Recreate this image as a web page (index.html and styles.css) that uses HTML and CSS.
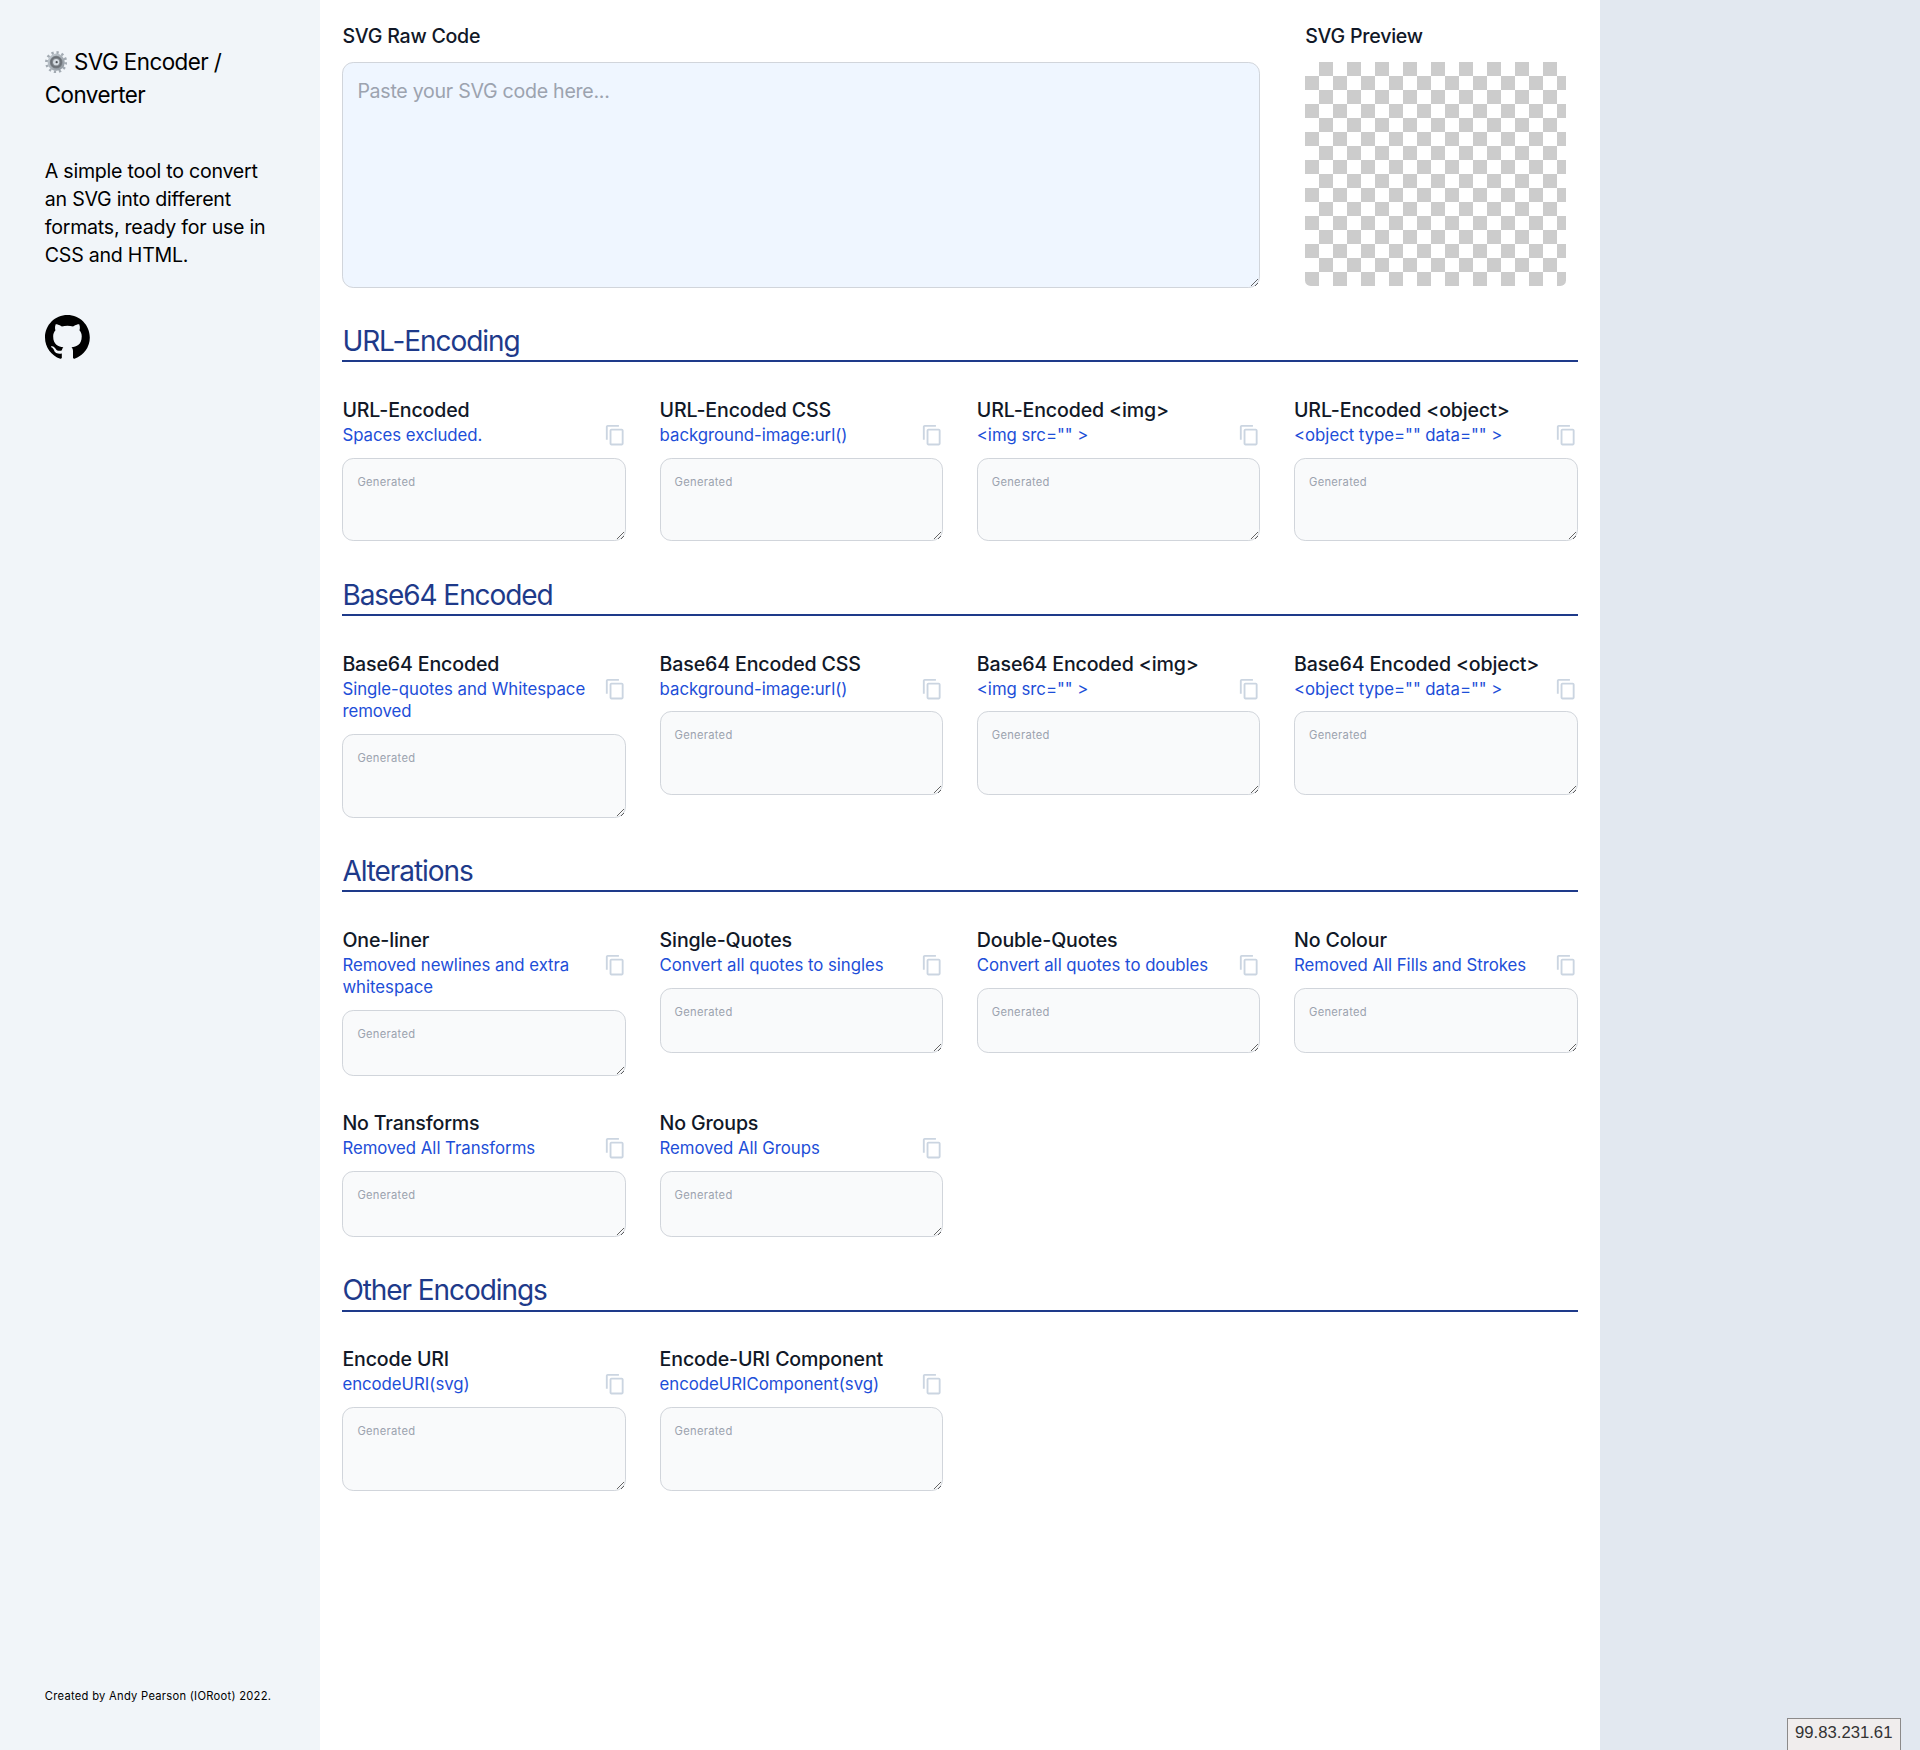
FILE: index.html
```html
<!DOCTYPE html>
<html lang="en">
<head>
<meta charset="utf-8">
<title>SVG Encoder / Converter</title>
<link rel="stylesheet" href="styles.css">
</head>
<body>
<svg class="defs" aria-hidden="true">
  <symbol id="copy" viewBox="0 0 24 24"><path d="M16 1H4c-1.1 0-2 .9-2 2v14h2V3h12V1zm3 4H8c-1.1 0-2 .9-2 2v14c0 1.1.9 2 2 2h11c1.1 0 2-.9 2-2V7c0-1.1-.9-2-2-2zm0 16H8V7h11v14z"/></symbol>
</svg>
<div class="page">
  <aside class="sidebar">
    <h1 class="title"><svg class="gear" viewBox="0 0 24 24"><defs><linearGradient id="steel" x1="0" y1="0" x2="1" y2="1"><stop offset="0" stop-color="#c3cbd2"/><stop offset="1" stop-color="#8f979f"/></linearGradient></defs><circle cx="12" cy="12" r="10.4" fill="none" stroke="#a3abb3" stroke-width="3" stroke-dasharray="2.4 3.045"/><circle cx="12" cy="12" r="8" fill="#7b8187" stroke="url(#steel)" stroke-width="2.4"/><circle cx="12" cy="12" r="5.2" fill="#868c92" stroke="#6b7177" stroke-width="1.6"/><circle cx="12" cy="12" r="3.3" fill="#d5dce2"/><circle cx="12.5" cy="12" r="1.2" fill="#4b4f54"/></svg> <span>SVG Encoder / Converter</span></h1>
    <p class="intro">A simple tool to convert an SVG into different formats, ready for use in CSS and HTML.</p>
    <a class="github" href="#" aria-label="GitHub"><svg viewBox="0 0 16 16"><path d="M8 0C3.58 0 0 3.58 0 8c0 3.54 2.29 6.53 5.47 7.59.4.07.55-.17.55-.38 0-.19-.01-.82-.01-1.49-2.01.37-2.53-.49-2.69-.94-.09-.23-.48-.94-.82-1.13-.28-.15-.68-.52-.01-.53.63-.01 1.08.58 1.23.82.72 1.21 1.87.87 2.33.66.07-.52.28-.87.51-1.07-1.78-.2-3.64-.89-3.64-3.95 0-.87.31-1.59.82-2.15-.08-.2-.36-1.02.08-2.12 0 0 .67-.21 2.2.82.64-.18 1.32-.27 2-.27s1.36.09 2 .27c1.53-1.04 2.2-.82 2.2-.82.44 1.1.16 1.92.08 2.12.51.56.82 1.27.82 2.15 0 3.07-1.87 3.75-3.65 3.95.29.25.54.73.54 1.48 0 1.07-.01 1.93-.01 2.2 0 .21.15.46.55.38A8.01 8.01 0 0 0 16 8c0-4.42-3.58-8-8-8z"/></svg></a>
    <p class="credit">Created by Andy Pearson (IORoot) 2022.</p>
  </aside>
  <main class="main">
    <section class="grid source">
      <div class="raw"><label class="label" for="raw">SVG Raw Code</label><textarea id="raw" class="input" rows="7" placeholder="Paste your SVG code here..."></textarea></div>
      <div class="preview"><span class="label">SVG Preview</span><div class="checker"></div></div>
    </section>

    <h2 class="heading">URL-Encoding</h2>
    <section class="grid">
      <div><div class="label">URL-Encoded</div><div class="sub"><span>Spaces excluded.</span><svg class="copy"><use href="#copy"/></svg></div><textarea class="output" rows="3" placeholder="Generated"></textarea></div>
      <div><div class="label">URL-Encoded CSS</div><div class="sub"><span>background-image:url()</span><svg class="copy"><use href="#copy"/></svg></div><textarea class="output" rows="3" placeholder="Generated"></textarea></div>
      <div><div class="label">URL-Encoded &lt;img&gt;</div><div class="sub"><span>&lt;img src="" &gt;</span><svg class="copy"><use href="#copy"/></svg></div><textarea class="output" rows="3" placeholder="Generated"></textarea></div>
      <div><div class="label">URL-Encoded &lt;object&gt;</div><div class="sub"><span>&lt;object type="" data="" &gt;</span><svg class="copy"><use href="#copy"/></svg></div><textarea class="output" rows="3" placeholder="Generated"></textarea></div>
    </section>

    <h2 class="heading">Base64 Encoded</h2>
    <section class="grid">
      <div><div class="label">Base64 Encoded</div><div class="sub"><span>Single-quotes and Whitespace removed</span><svg class="copy"><use href="#copy"/></svg></div><textarea class="output" rows="3" placeholder="Generated"></textarea></div>
      <div><div class="label">Base64 Encoded CSS</div><div class="sub"><span>background-image:url()</span><svg class="copy"><use href="#copy"/></svg></div><textarea class="output" rows="3" placeholder="Generated"></textarea></div>
      <div><div class="label">Base64 Encoded &lt;img&gt;</div><div class="sub"><span>&lt;img src="" &gt;</span><svg class="copy"><use href="#copy"/></svg></div><textarea class="output" rows="3" placeholder="Generated"></textarea></div>
      <div><div class="label">Base64 Encoded &lt;object&gt;</div><div class="sub"><span>&lt;object type="" data="" &gt;</span><svg class="copy"><use href="#copy"/></svg></div><textarea class="output" rows="3" placeholder="Generated"></textarea></div>
    </section>

    <h2 class="heading">Alterations</h2>
    <section class="grid">
      <div><div class="label">One-liner</div><div class="sub"><span>Removed newlines and extra whitespace</span><svg class="copy"><use href="#copy"/></svg></div><textarea class="output" rows="2" placeholder="Generated"></textarea></div>
      <div><div class="label">Single-Quotes</div><div class="sub"><span>Convert all quotes to singles</span><svg class="copy"><use href="#copy"/></svg></div><textarea class="output" rows="2" placeholder="Generated"></textarea></div>
      <div><div class="label">Double-Quotes</div><div class="sub"><span>Convert all quotes to doubles</span><svg class="copy"><use href="#copy"/></svg></div><textarea class="output" rows="2" placeholder="Generated"></textarea></div>
      <div><div class="label">No Colour</div><div class="sub"><span>Removed All Fills and Strokes</span><svg class="copy"><use href="#copy"/></svg></div><textarea class="output" rows="2" placeholder="Generated"></textarea></div>
      <div><div class="label">No Transforms</div><div class="sub"><span>Removed All Transforms</span><svg class="copy"><use href="#copy"/></svg></div><textarea class="output" rows="2" placeholder="Generated"></textarea></div>
      <div><div class="label">No Groups</div><div class="sub"><span>Removed All Groups</span><svg class="copy"><use href="#copy"/></svg></div><textarea class="output" rows="2" placeholder="Generated"></textarea></div>
    </section>

    <h2 class="heading">Other Encodings</h2>
    <section class="grid">
      <div><div class="label">Encode URI</div><div class="sub"><span>encodeURI(svg)</span><svg class="copy"><use href="#copy"/></svg></div><textarea class="output" rows="3" placeholder="Generated"></textarea></div>
      <div><div class="label">Encode-URI Component</div><div class="sub"><span>encodeURIComponent(svg)</span><svg class="copy"><use href="#copy"/></svg></div><textarea class="output" rows="3" placeholder="Generated"></textarea></div>
    </section>
  </main>
</div>
<div class="address">99.83.231.61</div>
</body>
</html>
```
FILE: styles.css
```css
*, *::before, *::after { box-sizing: border-box; }
html { font-size: 22.4px; }
body { margin: 0; background: #e2e8f0; color: #000; font-family: Inter, "Liberation Sans", sans-serif; line-height: 1.5; }
h1, h2, p { margin: 0; font-weight: 400; }
.defs { position: absolute; width: 0; height: 0; }

.page { display: flex; min-height: 100vh; }
.sidebar { width: 320px; flex: none; padding: 2rem; display: flex; flex-direction: column; gap: 2rem; background: #f1f5f9; }
.title { font-size: 1rem; line-height: 1.5rem; letter-spacing: -0.55px; }
.gear { width: 1rem; height: 1rem; margin-right: 1px; vertical-align: -0.16rem; }
.intro { font-size: .875rem; line-height: 1.25rem; letter-spacing: -0.25px; }
.github { display: block; width: 2rem; height: 2rem; padding-top: 1px; }
.github svg { display: block; width: 100%; height: 2rem; }
.credit { margin-top: auto; padding-top: 2px; margin-bottom: -1px; font-size: .5rem; line-height: 1.6; letter-spacing: .27px; white-space: nowrap; }

.main { width: 1280px; padding: 1rem; background: #fff; }
.grid { display: grid; grid-template-columns: repeat(4, minmax(0, 1fr)); gap: 1.5rem; }
.raw { grid-column: span 3; }
.preview { padding: 0 .5rem; }
.label { display: block; font-size: .875rem; line-height: 1.25rem; font-weight: 500; letter-spacing: -0.15px; color: #111827; }
.source .label { margin-bottom: .5rem; letter-spacing: -0.24px; }
.heading { height: calc(1.75rem + 2px); margin: 1.5rem 0; padding-top: 1px; font-size: 1.25rem; line-height: 1.75rem; letter-spacing: -1.07px; color: #1e3a8a; border-bottom: 2px solid #1e3a8a; }
.sub { display: flex; justify-content: space-between; margin-bottom: .5rem; font-size: .75rem; line-height: 1rem; letter-spacing: -0.03px; color: #1d4ed8; }
.copy { flex: none; width: 1rem; height: 1rem; fill: #cbd5e1; }

textarea { display: block; width: 100%; margin: 0; padding: .625rem; border: 1px solid #d1d5db; border-radius: .5rem; font-family: inherit; resize: both; }
textarea::placeholder { color: #9ca3af; opacity: 1; }
.input { font-size: .875rem; line-height: 1.25rem; letter-spacing: -0.28px; background: #eff6ff; }
.output { padding-top: 15px; padding-bottom: 13px; font-size: .5rem; line-height: 17.94px; letter-spacing: .28px; background: #f9fafb; }

.checker { height: 10rem; border-radius: .25rem; background: repeating-conic-gradient(#ccc 0 25%, #fff 0 50%) 0 0 / 28px 28px; }

.address { position: fixed; right: 19px; bottom: 0; width: 114px; height: 32px; padding: 4px 0 0 7px; border: 1px solid #8c8a8a; border-bottom: 0; background: #f0eded; color: #333; font: 16.7px/20px "Liberation Sans", sans-serif; }
```
